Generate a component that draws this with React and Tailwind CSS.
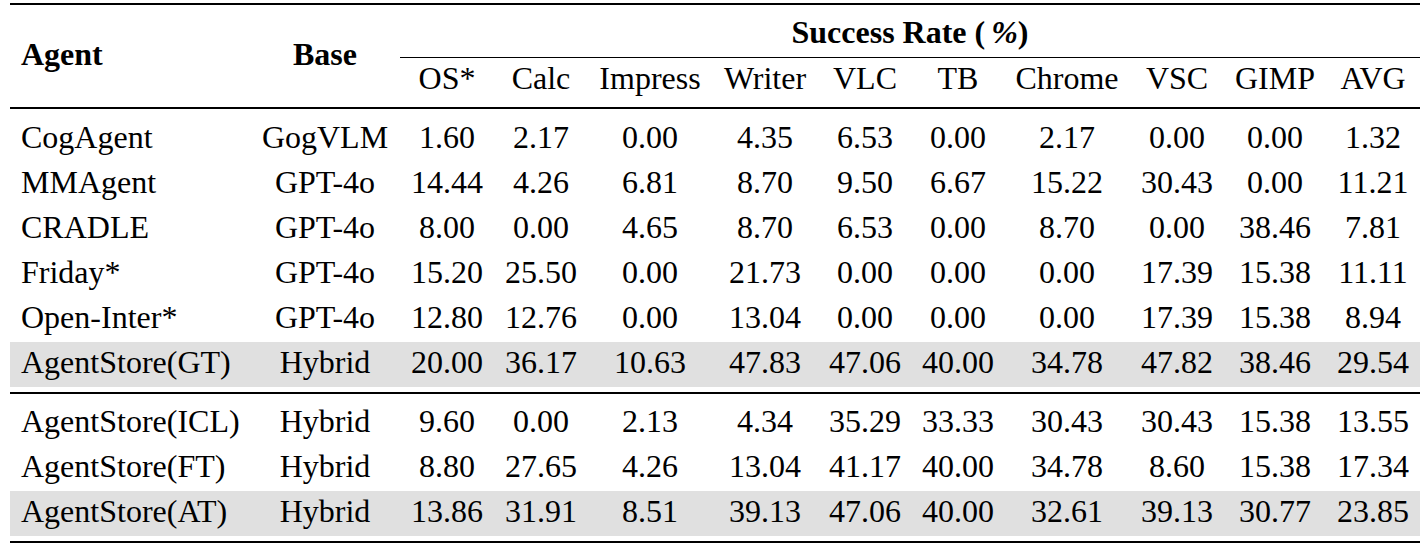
import React from 'react';

const cols =
  'grid grid-cols-[240px_150px_94px_94px_124px_106px_94px_92px_126px_94px_102px_94px]';

const apps = ['OS*', 'Calc', 'Impress', 'Writer', 'VLC', 'TB', 'Chrome', 'VSC', 'GIMP', 'AVG'];

const topRows = [
  ['CogAgent', 'GogVLM', '1.60', '2.17', '0.00', '4.35', '6.53', '0.00', '2.17', '0.00', '0.00', '1.32'],
  ['MMAgent', 'GPT-4o', '14.44', '4.26', '6.81', '8.70', '9.50', '6.67', '15.22', '30.43', '0.00', '11.21'],
  ['CRADLE', 'GPT-4o', '8.00', '0.00', '4.65', '8.70', '6.53', '0.00', '8.70', '0.00', '38.46', '7.81'],
  ['Friday*', 'GPT-4o', '15.20', '25.50', '0.00', '21.73', '0.00', '0.00', '0.00', '17.39', '15.38', '11.11'],
  ['Open-Inter*', 'GPT-4o', '12.80', '12.76', '0.00', '13.04', '0.00', '0.00', '0.00', '17.39', '15.38', '8.94'],
  ['AgentStore(GT)', 'Hybrid', '20.00', '36.17', '10.63', '47.83', '47.06', '40.00', '34.78', '47.82', '38.46', '29.54', true],
];

const bottomRows = [
  ['AgentStore(ICL)', 'Hybrid', '9.60', '0.00', '2.13', '4.34', '35.29', '33.33', '30.43', '30.43', '15.38', '13.55'],
  ['AgentStore(FT)', 'Hybrid', '8.80', '27.65', '4.26', '13.04', '41.17', '40.00', '34.78', '8.60', '15.38', '17.34'],
  ['AgentStore(AT)', 'Hybrid', '13.86', '31.91', '8.51', '39.13', '47.06', '40.00', '32.61', '39.13', '30.77', '23.85', true],
];

function Row({ cells }) {
  const shaded = cells[12] === true;
  const values = cells.slice(0, 12);
  return (
    <div className={`${cols} h-[45px] leading-[41px] pb-[4px] ${shaded ? 'bg-[#e0e0e0]' : ''}`}>
      {values.map((v, i) => (
        <div key={i} className={i === 0 ? 'pl-[11px] text-left' : 'text-center'}>
          {v}
        </div>
      ))}
    </div>
  );
}

export default function App() {
  return (
    <div className="bg-white w-[1428px] h-[548px] overflow-hidden text-black text-[32px] font-['Liberation_Serif',serif]">
      <div className="ml-[10px] w-[1410px] pt-[3px] flex flex-col">
        <div className="h-[2px] bg-black" />

        {/* header */}
        <div className={`${cols} grid-rows-[53px_49px] h-[102px]`}>
          <div className="row-span-2 pl-[11px] pt-[31px] font-bold leading-[36px]">Agent</div>
          <div className="row-span-2 text-center pt-[31px] font-bold leading-[36px]">Base</div>
          <div className="col-span-10 text-center font-bold leading-[36px] pt-[9px] h-[53px] border-b border-black">
            Success Rate (<span className="italic ml-[6px]">%</span>)
          </div>
          {apps.map((a) => (
            <div key={a} className="text-center leading-[36px] pt-[2px]">
              {a}
            </div>
          ))}
        </div>

        <div className="h-[1.5px] bg-black" />
        <div className="h-[8px]" />

        {topRows.map((r) => (
          <Row key={r[0]} cells={r} />
        ))}

        <div className="h-[5px]" />
        <div className="h-[2px] bg-black" />
        <div className="h-[7px]" />

        {bottomRows.map((r) => (
          <Row key={r[0]} cells={r} />
        ))}

        <div className="h-[5px]" />
        <div className="h-[2.5px] bg-black" />
      </div>
    </div>
  );
}
